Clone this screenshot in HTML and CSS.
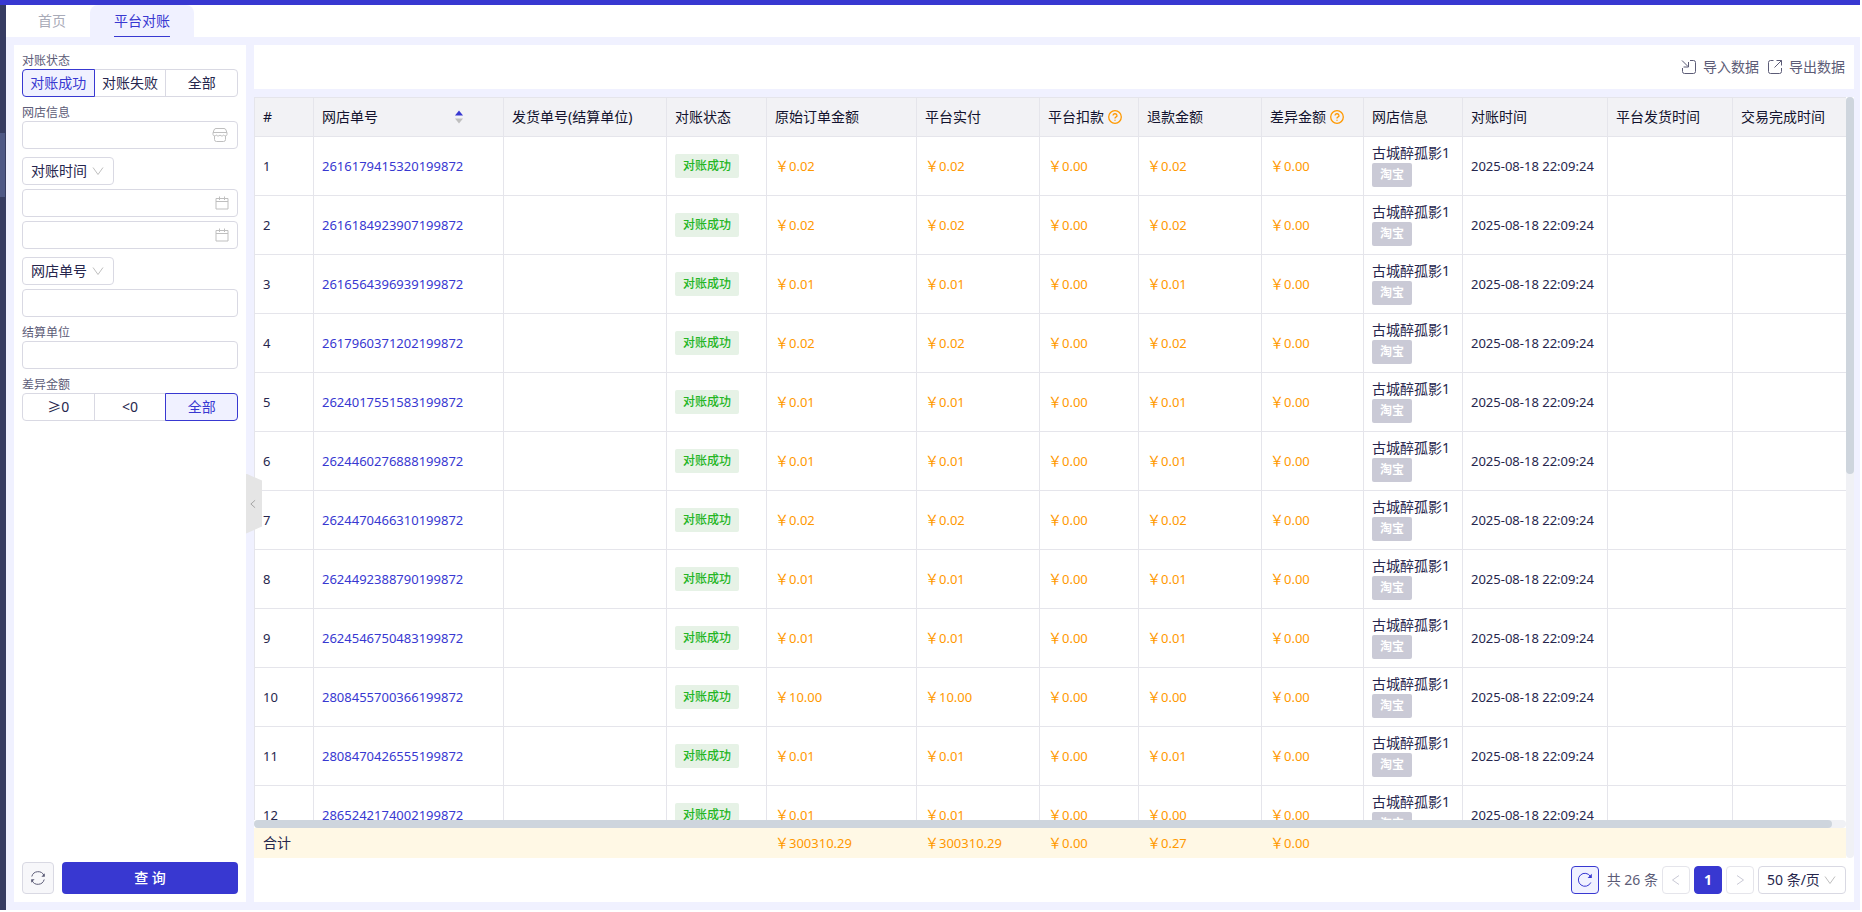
FILE: index.html
```html
<!DOCTYPE html>
<html lang="zh-CN">
<head>
  <meta charset="UTF-8">
  <meta name="viewport" content="width=device-width, initial-scale=1.0">
  <title>平台对账</title>
  <link rel="stylesheet" href="styles.css">
</head>
<body>
  <div class="topbar"></div>
  <div class="app">
    <div class="rail"><div class="rail-thumb"></div></div>
    <div class="page">
      <nav class="tabs">
        <a class="tab" href="#">首页</a>
        <a class="tab active" href="#"><span>平台对账</span></a>
      </nav>

      <div class="content">
        <form class="sidebar" onsubmit="return false">
          <fieldset class="field">
            <legend>对账状态</legend>
            <div class="segment">
              <label><input type="radio" name="status" checked><span>对账成功</span></label>
              <label><input type="radio" name="status"><span>对账失败</span></label>
              <label><input type="radio" name="status"><span>全部</span></label>
            </div>
          </fieldset>

          <div class="field">
            <label for="shop">网店信息</label>
            <div class="input-box">
              <input type="text" id="shop">
              <svg class="input-icon shop-icon" viewBox="0 0 16 16"><path d="M4 1.500h8q1.500 0 2 1.500l1 3v1.500q0 1-1.200 1.300q-1.300.2-2-.8q-.9 1-1.900 1t-1.900-1q-.9 1-1.900 1t-1.900-1q-.7 1-2 .8Q1 8.500 1 7.500V6l1-3q.5-1.500 2-1.500zM1 5.500h14M2.500 9v3.500a2 2 0 0 0 2 2h7a2 2 0 0 0 2-2V9"/></svg>
            </div>
          </div>

          <div class="field pick">
            <div class="select-box">
              <select id="timeType" aria-label="时间类型"><option>对账时间</option></select>
              <svg class="arrow" viewBox="0 0 12 12"><path d="M1 2.500l5 7 5-7"/></svg>
            </div>
            <div class="input-box">
              <input type="text" id="timeStart" aria-label="开始时间">
              <svg class="input-icon" viewBox="0 0 16 16"><path d="M2 3.500h12v10.500H2zM2 6.500h12M5.500 1.500v3.500M10.500 1.500v3.500"/></svg>
            </div>
            <div class="input-box">
              <input type="text" id="timeEnd" aria-label="结束时间">
              <svg class="input-icon" viewBox="0 0 16 16"><path d="M2 3.500h12v10.500H2zM2 6.500h12M5.500 1.500v3.500M10.500 1.500v3.500"/></svg>
            </div>
          </div>

          <div class="field pick">
            <div class="select-box">
              <select id="noType" aria-label="单号类型"><option>网店单号</option></select>
              <svg class="arrow" viewBox="0 0 12 12"><path d="M1 2.500l5 7 5-7"/></svg>
            </div>
            <div class="input-box"><input type="text" id="orderNo" aria-label="单号"></div>
          </div>

          <div class="field">
            <label for="unit">结算单位</label>
            <div class="input-box"><input type="text" id="unit"></div>
          </div>

          <fieldset class="field">
            <legend>差异金额</legend>
            <div class="segment">
              <label><input type="radio" name="diff"><span>≥0</span></label>
              <label><input type="radio" name="diff"><span>&lt;0</span></label>
              <label><input type="radio" name="diff" checked><span>全部</span></label>
            </div>
          </fieldset>

          <div class="actions">
            <button type="reset" class="btn-reset" aria-label="重置">
              <svg viewBox="0 0 16 16"><path d="M1.800 6.500A6.500 6.500 0 0 1 14 5.500M14.200 9.500A6.500 6.500 0 0 1 2 10.500"/><path class="solid" d="M14.800 3.200v3.600h-3.400zM1.200 12.800V9.200h3.400z"/></svg>
            </button>
            <button type="submit" class="btn-query">查 询</button>
          </div>

          <button type="button" class="collapse" aria-label="收起">
            <svg viewBox="0 0 12 12"><path d="M8.500 1.500l-5 4.500 5 4.500"/></svg>
          </button>
        </form>

        <main class="main">
          <div class="toolbar">
            <button type="button">
              <svg viewBox="0 0 16 16"><path d="M9 1.500h3.500a2 2 0 0 1 2 2v9a2 2 0 0 1-2 2h-9a2 2 0 0 1-2-2V9M1 1.500l6 6M7.500 3v5H2.500"/></svg>
              导入数据
            </button>
            <button type="button">
              <svg viewBox="0 0 16 16"><path d="M6.500 1.500h-3a2 2 0 0 0-2 2v9a2 2 0 0 0 2 2h9a2 2 0 0 0 2-2V9M7.500 8.500l7-7M9.500 1.500h5v5"/></svg>
              导出数据
            </button>
          </div>

          <div class="grid">
            <div class="grid-body">
              <div class="grid-scroll">
                <table>
                  <colgroup>
                    <col class="c-index"><col class="c-order"><col class="c-ship"><col class="c-status">
                    <col class="c-origin"><col class="c-paid"><col class="c-fee"><col class="c-refund">
                    <col class="c-diff"><col class="c-shop"><col class="c-time"><col class="c-send"><col class="c-done">
                  </colgroup>
                  <thead>
                    <tr>
                      <th>#</th>
                      <th>
                        <div class="sortable">网店单号
                          <svg viewBox="0 0 10 14"><path fill="#3838d1" d="M5 0.500l4 5H1z"/><path fill="#bfbfbf" d="M1 8.500h8l-4 5z"/></svg>
                        </div>
                      </th>
                      <th>发货单号(结算单位)</th>
                      <th>对账状态</th>
                      <th>原始订单金额</th>
                      <th>平台实付</th>
                      <th><div class="tip">平台扣款 <svg viewBox="0 0 14 14"><circle cx="7" cy="7" r="6.300"/><path d="M5 5.500a2 1.800 0 1 1 2.800 1.700q-.8.400-.8 1.300M7 9.800v1"/></svg></div></th>
                      <th>退款金额</th>
                      <th><div class="tip">差异金额 <svg viewBox="0 0 14 14"><circle cx="7" cy="7" r="6.300"/><path d="M5 5.500a2 1.800 0 1 1 2.800 1.700q-.8.400-.8 1.300M7 9.800v1"/></svg></div></th>
                      <th>网店信息</th>
                      <th>对账时间</th>
                      <th>平台发货时间</th>
                      <th>交易完成时间</th>
                    </tr>
                  </thead>
                  <tbody id="rows"></tbody>
                </table>
              </div>
              <div class="hbar"><div class="hbar-thumb"></div></div>
              <table class="summary">
                <colgroup>
                  <col class="c-index"><col class="c-order"><col class="c-ship"><col class="c-status">
                  <col class="c-origin"><col class="c-paid"><col class="c-fee"><col class="c-refund">
                  <col class="c-diff"><col>
                </colgroup>
                <tbody>
                  <tr>
                    <td>合计</td><td></td><td></td><td></td>
                    <td class="money">￥<span>300310.29</span></td>
                    <td class="money">￥<span>300310.29</span></td>
                    <td class="money">￥<span>0.00</span></td>
                    <td class="money">￥<span>0.27</span></td>
                    <td class="money">￥<span>0.00</span></td>
                    <td></td>
                  </tr>
                </tbody>
              </table>
            </div>
            <div class="vbar"><div class="vbar-thumb"></div></div>
          </div>

          <div class="pager">
            <button type="button" class="page-btn reload" aria-label="刷新">
              <svg viewBox="0 0 16 16"><path d="M13.800 10.500A6.500 6.500 0 1 1 13.500 4.500"/><path class="solid" d="M14.800 1.800v4.200h-4.200z"/></svg>
            </button>
            <span class="total">共 26 条</span>
            <button type="button" class="page-btn off" aria-label="上一页"><svg viewBox="0 0 12 12"><path d="M9 1.500l-6.500 4.500 6.500 4.500"/></svg></button>
            <button type="button" class="page-btn current">1</button>
            <button type="button" class="page-btn off" aria-label="下一页"><svg viewBox="0 0 12 12"><path d="M3 1.500l6.500 4.500-6.500 4.500"/></svg></button>
            <div class="select-box">
              <select id="pageSize" aria-label="每页条数"><option>50 条/页</option></select>
              <svg class="arrow" viewBox="0 0 12 12"><path d="M1 2.500l5 7 5-7"/></svg>
            </div>
          </div>
        </main>
      </div>
    </div>
  </div>

  <script>
    // order no, original amount, paid, refund
    const orders = [
      ['2616179415320199872', '0.02', '0.02', '0.02'],
      ['2616184923907199872', '0.02', '0.02', '0.02'],
      ['2616564396939199872', '0.01', '0.01', '0.01'],
      ['2617960371202199872', '0.02', '0.02', '0.02'],
      ['2624017551583199872', '0.01', '0.01', '0.01'],
      ['2624460276888199872', '0.01', '0.01', '0.01'],
      ['2624470466310199872', '0.02', '0.02', '0.02'],
      ['2624492388790199872', '0.01', '0.01', '0.01'],
      ['2624546750483199872', '0.01', '0.01', '0.01'],
      ['2808455700366199872', '10.00', '10.00', '0.00'],
      ['2808470426555199872', '0.01', '0.01', '0.01'],
      ['2865242174002199872', '0.01', '0.01', '0.00']
    ];
    const money = value => `<td class="money">￥<span>${value}</span></td>`;

    document.getElementById('rows').innerHTML = orders.map((order, i) => `
      <tr>
        <td class="num">${i + 1}</td>
        <td class="num"><a href="#">${order[0]}</a></td>
        <td></td>
        <td><span class="tag success">对账成功</span></td>
        ${money(order[1])}
        ${money(order[2])}
        ${money('0.00')}
        ${money(order[3])}
        ${money('0.00')}
        <td class="shop-cell">古城醉孤影1<span class="tag shop">淘宝</span></td>
        <td class="num">2025-08-18 22:09:24</td>
        <td></td>
        <td></td>
      </tr>
    `).join('');
  </script>
</body>
</html>
```

FILE: styles.css
```css
* {
  box-sizing: border-box;
}
body {
  display: flex;
  flex-direction: column;
  height: 100vh;
  margin: 0;
  padding: 0 2px 2px 0;
  overflow: hidden;
  background: #fff;
  color: #26264d;
  font-family: "Noto Sans", "Noto Sans CJK SC", sans-serif;
  font-size: 14px;
  line-height: 20px;
}
a {
  color: #3838d1;
  text-decoration: none;
}
button, input, select {
  margin: 0;
  color: inherit;
  font-family: inherit;
  font-size: 14px;
  line-height: 20px;
}
button {
  padding: 0;
  cursor: pointer;
}
svg {
  flex: none;
  fill: none;
  stroke: currentColor;
}
svg .solid {
  fill: currentColor;
  stroke: none;
}

/* frame */
.topbar {
  flex: none;
  height: 5px;
  background: #3838d1;
}
.app {
  display: flex;
  flex: 1;
  min-height: 0;
}
.rail {
  flex: none;
  width: 6px;
  padding: 128px 1px 0 0;
  background: #363c62;
}
.rail-thumb {
  height: 64px;
  background: #4e5886;
}
.page {
  display: flex;
  flex: 1;
  flex-direction: column;
  min-width: 0;
  background: #f0f1ff;
}
.tabs {
  display: flex;
  flex: none;
  height: 32px;
  padding-left: 8px;
  background: #fff;
}
.tab {
  padding: 0 24px;
  color: #a9abb8;
  line-height: 32px;
}
.tab.active {
  border-radius: 8px 8px 0 0;
  background: #f0f1ff;
  color: #3838d1;
}
.tab.active span {
  display: block;
  height: 32px;
  border-bottom: 1px solid #3838d1;
}
.content {
  display: flex;
  flex: 1;
  gap: 8px;
  min-height: 0;
  padding: 8px 6px 8px 8px;
}

/* filter panel */
.sidebar {
  position: relative;
  display: flex;
  flex: none;
  flex-direction: column;
  gap: 8px;
  width: 232px;
  padding: 8px;
  background: #fff;
}
.field {
  min-width: 0;
  margin: 0;
  padding: 0;
  border: 0;
}
.field > label, .field > legend {
  display: block;
  padding: 0;
  color: #5c5c77;
  font-size: 12px;
  line-height: 16px;
}
.pick {
  display: flex;
  flex-direction: column;
  gap: 4px;
  align-items: flex-start;
}
.segment {
  display: flex;
}
.segment label {
  position: relative;
  flex: 1;
  cursor: pointer;
}
.segment label + label {
  margin-left: -1px;
}
.segment input {
  position: absolute;
  opacity: 0;
}
.segment span {
  display: block;
  height: 28px;
  border: 1px solid #d9d9e3;
  line-height: 26px;
  text-align: center;
}
.segment label:first-child span {
  border-radius: 4px 0 0 4px;
}
.segment label:last-child span {
  border-radius: 0 4px 4px 0;
}
.segment input:checked + span {
  position: relative;
  z-index: 1;
  border-color: #3838d1;
  background: #f0f1ff;
  color: #3838d1;
}
.input-box {
  position: relative;
  width: 100%;
}
.input-box input {
  display: block;
  width: 100%;
  height: 28px;
  padding: 0 32px 0 8px;
  border: 1px solid #d9d9e3;
  border-radius: 4px;
  background: #fff;
}
.input-icon {
  position: absolute;
  top: 6px;
  right: 8px;
  width: 16px;
  height: 16px;
  color: #bfbfbf;
}
.input-icon.shop-icon {
  right: 10px;
}
.select-box {
  position: relative;
}
.select-box select {
  display: block;
  height: 28px;
  padding: 0 26px 0 8px;
  border: 1px solid #d9d9e3;
  border-radius: 4px;
  background: #fff;
  appearance: none;
}
.arrow {
  position: absolute;
  top: 8px;
  right: 10px;
  width: 12px;
  height: 12px;
  color: #bfbfbf;
  pointer-events: none;
}
.actions {
  display: flex;
  gap: 8px;
  margin-top: auto;
}
.btn-reset, .btn-query {
  height: 32px;
  border-radius: 4px;
}
.btn-reset {
  display: flex;
  align-items: center;
  justify-content: center;
  width: 32px;
  border: 1px solid #d9d9e3;
  background: #f7f7fa;
  color: #5c5c77;
}
.btn-reset svg {
  width: 16px;
  height: 16px;
}
.btn-query {
  flex: 1;
  border: 0;
  background: #3838d1;
  color: #fff;
  font-weight: 500;
}
.collapse {
  position: absolute;
  top: 50%;
  left: 100%;
  z-index: 2;
  display: flex;
  align-items: center;
  width: 16px;
  height: 60px;
  padding-left: 2px;
  border: 0;
  background: #e5e5e5;
  clip-path: polygon(0 0, 100% 7px, 100% 53px, 0 100%);
  color: #999;
}
.collapse svg {
  width: 10px;
  height: 12px;
}

/* right side */
.main {
  display: flex;
  flex: 1;
  flex-direction: column;
  min-width: 0;
}
.toolbar {
  display: flex;
  flex: none;
  gap: 8px;
  align-items: center;
  justify-content: flex-end;
  height: 44px;
  margin-bottom: 8px;
  padding-right: 9px;
  background: #fff;
}
.toolbar button {
  display: flex;
  gap: 6px;
  align-items: center;
  border: 0;
  background: none;
  color: #5c5c77;
}
.toolbar svg {
  width: 16px;
  height: 16px;
}
.grid {
  display: flex;
  flex: 1;
  min-height: 0;
  background: #fff;
}
.grid-body {
  display: flex;
  flex: 1;
  flex-direction: column;
  min-width: 0;
  overflow: hidden;
}
.grid-scroll {
  flex: 1;
  min-height: 0;
  overflow: hidden;
  border-top: 1px solid #e5e5eb;
  border-left: 1px solid #e5e5eb;
}
table {
  width: 1605px;
  border-collapse: separate;
  border-spacing: 0;
  table-layout: fixed;
}
.c-index { width: 59px; }
.c-order { width: 190px; }
.c-ship { width: 163px; }
.c-status { width: 100px; }
.c-origin { width: 150px; }
.c-paid { width: 123px; }
.c-fee { width: 99px; }
.c-refund { width: 123px; }
.c-diff { width: 102px; }
.c-shop { width: 99px; }
.c-time { width: 145px; }
.c-send { width: 125px; }
.c-done { width: 127px; }
th, td {
  padding: 0 8px;
  border-right: 1px solid #e5e5eb;
  border-bottom: 1px solid #e5e5eb;
  text-align: left;
  white-space: nowrap;
}
th {
  height: 39px;
  background: #f2f2f5;
  color: #12122e;
  font-weight: 400;
}
td {
  height: 59px;
}
.num, .money span {
  font-size: 13px;
}
.money {
  color: #ff9900;
}
.shop-cell {
  padding-bottom: 2px;
}
.sortable, .tip {
  display: flex;
  align-items: center;
}
.sortable {
  justify-content: space-between;
  padding-right: 31px;
}
.sortable svg {
  width: 10px;
  height: 14px;
  stroke: none;
}
.tip {
  gap: 4px;
}
.tip svg {
  width: 14px;
  height: 14px;
  color: #ff9900;
  stroke-width: 1.3;
}
.tag {
  display: block;
  width: fit-content;
  padding: 0 8px;
  border-radius: 2px;
  font-size: 12px;
  font-weight: 500;
  line-height: 24px;
}
.tag.success {
  background: #e6f2e6;
  color: #23b523;
}
.tag.shop {
  background: #cacad6;
  color: #fff;
  font-weight: 700;
}
.hbar {
  flex: none;
  height: 8px;
  border-radius: 4px;
  background: #f0f1f5;
}
.hbar-thumb {
  width: calc(100% - 14px);
  height: 8px;
  border-radius: 4px;
  background: #ced5dd;
}
.summary {
  flex: none;
  width: 100%;
  border-left: 1px solid #fff8e5;
  background: #fff8e5;
}
.summary td {
  height: 30px;
  border: 0;
}
.vbar {
  flex: none;
  width: 8px;
  border-radius: 4px;
  background: #f0f1f5;
}
.vbar-thumb {
  height: 49.5%;
  border-radius: 4px;
  background: #ced5dd;
}

/* pagination */
.pager {
  display: flex;
  flex: none;
  gap: 4px;
  align-items: center;
  justify-content: flex-end;
  padding: 8px;
  background: #fff;
}
.pager select {
  width: 88px;
}
.page-btn {
  display: flex;
  align-items: center;
  justify-content: center;
  width: 28px;
  height: 28px;
  border: 1px solid #e5e5eb;
  border-radius: 4px;
  background: #fff;
}
.page-btn svg {
  width: 12px;
  height: 12px;
}
.page-btn.off {
  color: #cacad6;
}
.page-btn.current {
  border-color: #3838d1;
  background: #3838d1;
  color: #fff;
  font-weight: 700;
}
.page-btn.reload {
  border-color: #3838d1;
  background: #f0f1ff;
  color: #3838d1;
}
.page-btn.reload svg {
  width: 16px;
  height: 16px;
}
.total {
  padding-left: 4px;
  color: #5c5c77;
}
```
